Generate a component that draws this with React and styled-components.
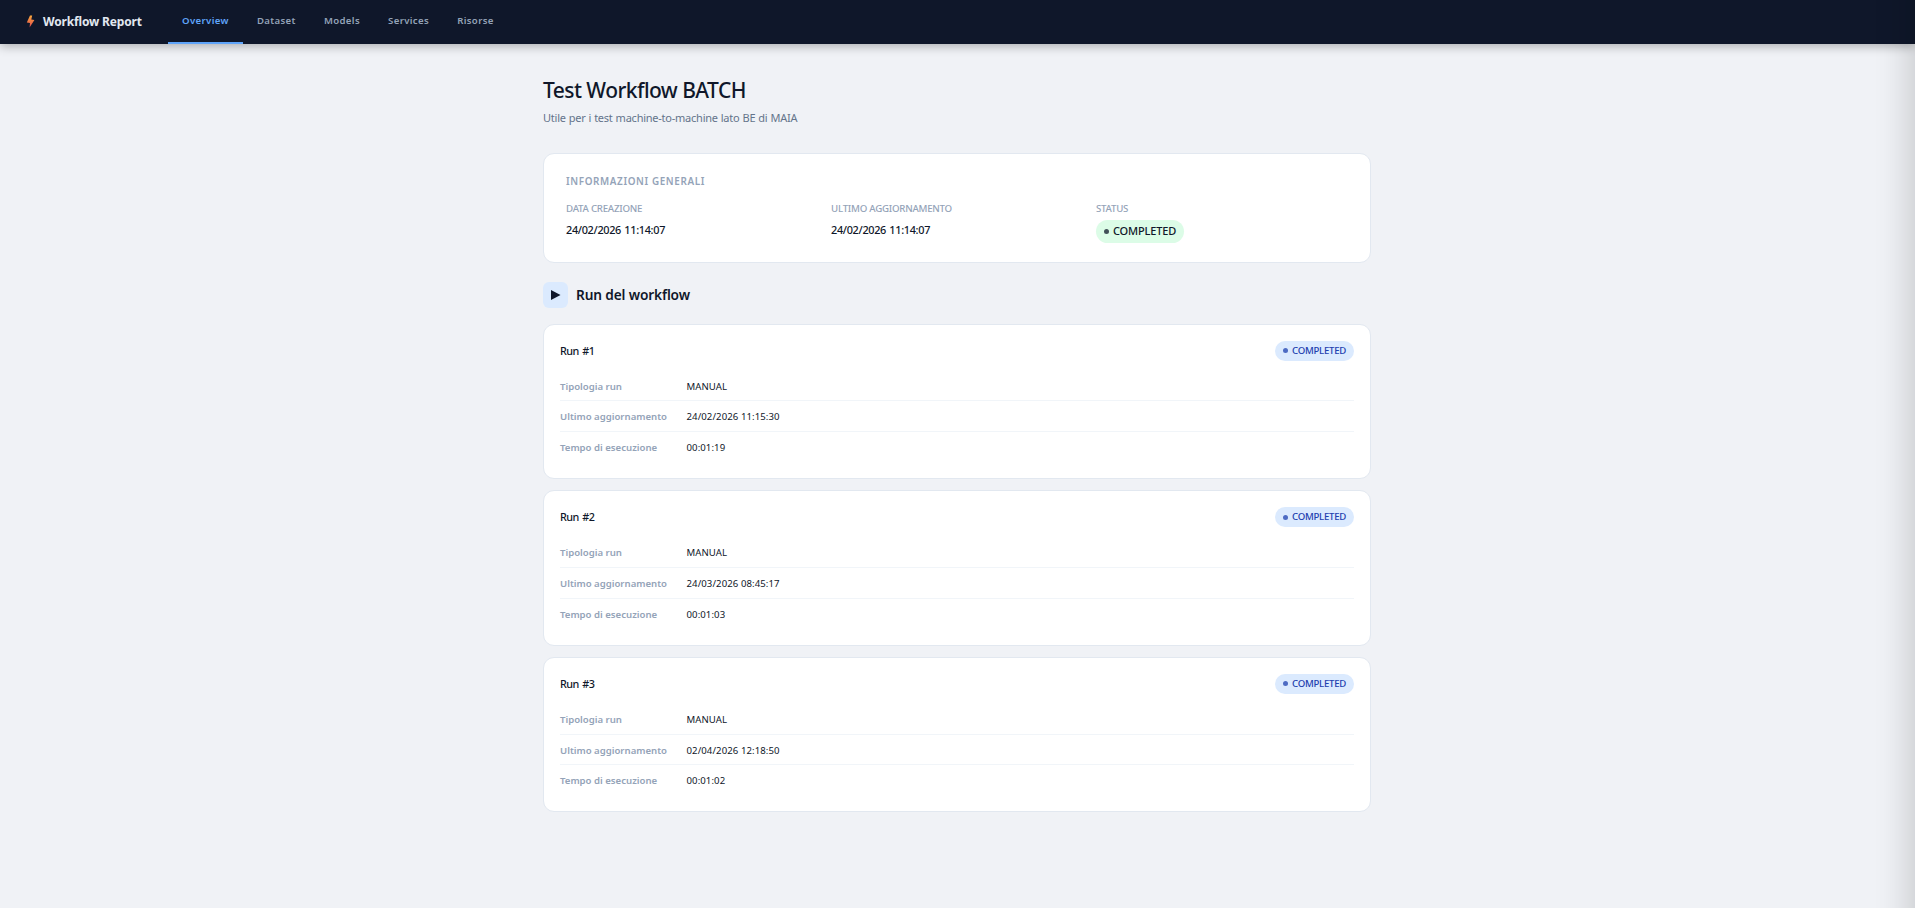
import React from "react";
import styled, { createGlobalStyle } from "styled-components";

const GlobalStyle = createGlobalStyle`
  *, *::before, *::after { box-sizing: border-box; }
  html, body { margin: 0; padding: 0; }
  body {
    background: #f0f2f6;
    color: #0f172a;
    font-family: "Noto Sans", "Open Sans", sans-serif;
    overflow: hidden;
  }
`;

const Page = styled.div`
  min-height: 100vh;
`;

const NavBar = styled.nav`
  position: relative;
  display: flex;
  height: 44px;
  padding-left: 26px;
  background: #0f172a;
  box-shadow: 0 2px 10px rgba(0, 0, 0, 0.3);
`;

const Brand = styled.div`
  display: flex;
  align-items: center;
  gap: 8px;
  width: 142px;
  height: 43px;
  color: #e2e8f0;
  font-size: 12px;
  font-weight: 700;
  letter-spacing: -0.16px;
  line-height: 16px;
  white-space: nowrap;
`;

const BoltIcon = styled.svg`
  width: 9px;
  height: 13px;
  flex: none;
`;

const NavLink = styled.a`
  height: 44px;
  padding: 0 14px;
  border-bottom: 2px solid ${({ $active }) => ($active ? "#60a5fa" : "transparent")};
  color: ${({ $active }) => ($active ? "#60a5fa" : "#94a3b8")};
  font-size: 9.6px;
  font-weight: 600;
  letter-spacing: 0.37px;
  line-height: 42px;
`;

const EdgeShadow = styled.div`
  position: fixed;
  top: -40px;
  bottom: -40px;
  left: 100%;
  width: 100px;
  box-shadow: -4px 0 36px rgba(0, 0, 0, 0.19);
`;

const Main = styled.main`
  width: 828px;
  margin: 0 0 0 543px;
  padding-top: 32px;
`;

const Title = styled.h1`
  margin: 0;
  font-size: 21px;
  font-weight: 500;
  letter-spacing: -0.55px;
  line-height: 28px;
`;

const Subtitle = styled.p`
  margin: 5px 0 27px;
  color: #64748b;
  font-size: 11px;
  letter-spacing: -0.24px;
  word-spacing: 0.4px;
  line-height: 17px;
`;

const Card = styled.section`
  background: #fff;
  border: 1px solid #e2e8f0;
  border-radius: 11px;
`;

const InfoCard = styled(Card)`
  height: 110px;
  padding: 20px 22px 0;
`;

const InfoHeading = styled.h2`
  margin: 0 0 14px;
  color: #94a3b8;
  font-size: 9.9px;
  font-weight: 600;
  letter-spacing: 0.62px;
  line-height: 14px;
  text-transform: uppercase;
`;

const InfoGrid = styled.div`
  display: grid;
  grid-template-columns: repeat(3, 1fr);
  gap: 13px;
`;

const InfoLabel = styled.div`
  color: #94a3b8;
  font-size: 9.7px;
  font-weight: 500;
  letter-spacing: -0.25px;
  line-height: 13px;
  text-transform: uppercase;
`;

const InfoValue = styled.div`
  margin-top: 7px;
  font-size: 10.9px;
  font-weight: 500;
  letter-spacing: -0.32px;
  word-spacing: 0.8px;
  line-height: 16px;
`;

const Badge = styled.span`
  display: flex;
  align-items: center;
  width: fit-content;
  border-radius: 99px;
  font-weight: 500;
  white-space: nowrap;

  &::before {
    content: "";
    width: 5px;
    height: 5px;
    margin-right: 4px;
    border-radius: 50%;
    background: currentColor;
    opacity: 0.75;
  }
`;

const StatusBadge = styled(Badge)`
  width: 88px;
  height: 23px;
  margin-top: 5px;
  padding: 0 0 1px 8px;
  background: #dcfce7;
  font-size: 11px;
  letter-spacing: -0.16px;
  line-height: 14px;
`;

const RunBadge = styled(Badge)`
  width: 79px;
  height: 20px;
  padding-left: 8px;
  background: #dbeafe;
  color: #1e40af;
  font-size: 9.6px;
  letter-spacing: -0.25px;
  line-height: 14px;
`;

const SectionHeader = styled.header`
  display: flex;
  align-items: center;
  gap: 8px;
  margin: 19px 0 15.8px;
`;

const SectionIcon = styled.span`
  display: flex;
  align-items: center;
  justify-content: center;
  width: 25px;
  height: 26px;
  border-radius: 6px;
  background: #dbeafe;
`;

const SectionTitle = styled.h2`
  margin: 0;
  font-size: 13.7px;
  font-weight: 600;
  letter-spacing: -0.14px;
  line-height: 26px;
`;

const RunList = styled.div`
  display: grid;
  gap: 11.3px;
`;

const RunCard = styled(Card)`
  height: 155.3px;
  padding: 16px 16px 0;
`;

const RunHeader = styled.div`
  display: flex;
  align-items: center;
  justify-content: space-between;
  height: 20px;
  margin-bottom: 10px;
`;

const RunTitle = styled.h3`
  margin: 0;
  font-size: 10.8px;
  font-weight: 500;
  letter-spacing: -0.5px;
  word-spacing: 1.2px;
  line-height: 19px;
  height: 20px;
`;

const Field = styled.div`
  display: flex;
  height: 30.6px;
  border-bottom: 1px solid #f1f5f9;
  font-size: 9.6px;
  line-height: 31.4px;

  &:last-child { border-bottom: 0; }
`;

const FieldLabel = styled.span`
  width: 126.5px;
  color: #94a3b8;
  font-weight: 600;
`;

const FieldValue = styled.span`
  letter-spacing: 0.08px;
`;

const links = ["Overview", "Dataset", "Models", "Services", "Risorse"];

const runs = [
  { updated: "24/02/2026 11:15:30", duration: "00:01:19" },
  { updated: "24/03/2026 08:45:17", duration: "00:01:03" },
  { updated: "02/04/2026 12:18:50", duration: "00:01:02" },
];

function Run({ number, updated, duration }) {
  const fields = [
    ["Tipologia run", "MANUAL"],
    ["Ultimo aggiornamento", updated],
    ["Tempo di esecuzione", duration],
  ];
  return (
    <RunCard>
      <RunHeader>
        <RunTitle>Run #{number}</RunTitle>
        <RunBadge>COMPLETED</RunBadge>
      </RunHeader>
      {fields.map(([label, value]) => (
        <Field key={label}>
          <FieldLabel>{label}</FieldLabel>
          <FieldValue>{value}</FieldValue>
        </Field>
      ))}
    </RunCard>
  );
}

export default function App() {
  return (
    <Page>
      <GlobalStyle />
      <NavBar>
        <Brand>
          <BoltIcon viewBox="0 0 9 13">
            <defs>
              <linearGradient id="bolt" x1="0" y1="0" x2="0" y2="1">
                <stop offset="0" stopColor="#f9a83c" />
                <stop offset="1" stopColor="#e0484d" />
              </linearGradient>
            </defs>
            <path d="M4 0.5H6.2L5.3 4.5L8.4 5L3.6 12.6L4 8L0.8 7.4Z" fill="url(#bolt)" />
          </BoltIcon>
          Workflow Report
        </Brand>
        {links.map((link, i) => (
          <NavLink key={link} $active={i === 0}>{link}</NavLink>
        ))}
      </NavBar>
      <Main>
        <Title>Test Workflow BATCH</Title>
        <Subtitle>Utile per i test machine-to-machine lato BE di MAIA</Subtitle>
        <InfoCard>
          <InfoHeading>Informazioni generali</InfoHeading>
          <InfoGrid>
            <div>
              <InfoLabel>Data creazione</InfoLabel>
              <InfoValue>24/02/2026 11:14:07</InfoValue>
            </div>
            <div>
              <InfoLabel>Ultimo aggiornamento</InfoLabel>
              <InfoValue>24/02/2026 11:14:07</InfoValue>
            </div>
            <div>
              <InfoLabel>Status</InfoLabel>
              <StatusBadge>COMPLETED</StatusBadge>
            </div>
          </InfoGrid>
        </InfoCard>
        <SectionHeader>
          <SectionIcon>
            <svg width="11" height="10" viewBox="0 0 11 10">
              <path d="M1 0L10.5 5L1 10Z" fill="#0f172a" />
            </svg>
          </SectionIcon>
          <SectionTitle>Run del workflow</SectionTitle>
        </SectionHeader>
        <RunList>
          {runs.map((run, i) => (
            <Run key={run.updated} number={i + 1} {...run} />
          ))}
        </RunList>
      </Main>
      <EdgeShadow />
    </Page>
  );
}
